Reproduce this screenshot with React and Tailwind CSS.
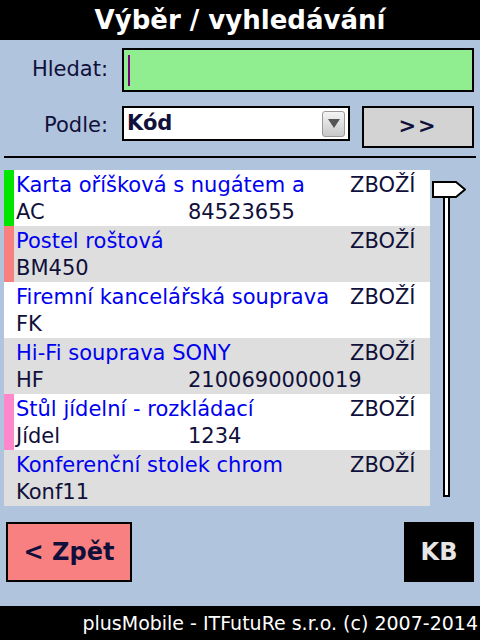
const rows = [
  { name: "Karta oříšková s nugátem a", code: "AC", ean: "84523655", mark: "bg-[#00e600]", bg: "bg-white" },
  { name: "Postel roštová", code: "BM450", ean: "", mark: "bg-[#f88080]", bg: "bg-[#dedede]" },
  { name: "Firemní kancelářská souprava", code: "FK", ean: "", mark: "", bg: "bg-white" },
  { name: "Hi-Fi souprava SONY", code: "HF", ean: "2100690000019", mark: "", bg: "bg-[#dedede]" },
  { name: "Stůl jídelní - rozkládací", code: "Jídel", ean: "1234", mark: "bg-[#ff88cc]", bg: "bg-white" },
  { name: "Konferenční stolek chrom", code: "Konf11", ean: "", mark: "", bg: "bg-[#dedede]" },
];

function Row({ row }) {
  return (
    <div className={`flex h-[56px] ${row.bg}`}>
      <div className={`w-[10px] shrink-0 ${row.mark}`} />
      <div className="flex flex-1 flex-col pl-[2px] pt-[2px] text-[21px] leading-[27px]">
        <div className="flex">
          <span className="w-[334px] whitespace-nowrap text-[#0000f0]">{row.name}</span>
          <span className="text-[#10103a]">ZBOŽÍ</span>
        </div>
        <div className="flex text-[#10103a]">
          <span className="w-[172px]">{row.code}</span>
          <span>{row.ean}</span>
        </div>
      </div>
    </div>
  );
}

export default function App() {
  return (
    <div className="flex h-[640px] w-[480px] flex-col overflow-hidden bg-[#b0c4de] font-['DejaVu_Sans',sans-serif] text-[#10103a]">
      <div className="flex h-[40px] shrink-0 items-center justify-center bg-black text-[26px] font-bold text-white">
        Výběr / vyhledávání
      </div>

      <div className="flex items-center pt-[8px]">
        <span className="w-[108px] text-right text-[21px]">Hledat:</span>
        <div className="ml-[14px] flex h-[44px] w-[352px] items-center border-2 border-black bg-[#90ee90] pl-[4px]">
          <div className="h-[31px] w-[2px] bg-[#800080]" />
        </div>
      </div>

      <div className="mt-[14px] flex items-start">
        <span className="mt-[4px] w-[108px] text-right text-[21px]">Podle:</span>
        <div className="ml-[14px] flex h-[35px] w-[228px] items-center justify-between border-2 border-black bg-white pl-[3px] pr-[3px]">
          <span className="text-[21px] font-bold">Kód</span>
          <div className="flex h-[26px] w-[23px] items-center justify-center rounded-[3px] border border-[#9a9a9a] bg-gradient-to-b from-[#f4f4f4] to-[#c8c8c8]">
            <svg width="12" height="9" viewBox="0 0 12 9">
              <polygon points="0,0 12,0 6,9" fill="#555" />
            </svg>
          </div>
        </div>
        <div className="ml-[12px] flex h-[42px] w-[112px] items-center justify-center border-2 border-black bg-[#d3d3d3] text-[21px] font-bold tracking-[2px]">
          &gt;&gt;
        </div>
      </div>

      <div className="mx-[4px] mt-[8px] h-[2px] bg-black" />

      <div className="mt-[12px] flex">
        <div className="ml-[4px] w-[426px] overflow-hidden">
          {rows.map((r) => (
            <Row key={r.code} row={r} />
          ))}
        </div>
        <div className="ml-[2px] flex flex-col pt-[11px]">
          <svg width="34" height="17" viewBox="0 0 34 17">
            <polygon points="1,1 24,1 33,8.5 24,16 1,16" fill="white" stroke="black" strokeWidth="2" />
          </svg>
          <div className="ml-[11px] h-[299px] w-[7px] border-2 border-t-0 border-black bg-white" />
        </div>
      </div>

      <div className="mt-[16px] flex justify-between px-[6px]">
        <div className="flex h-[60px] w-[126px] items-center justify-center border-2 border-black bg-[#f88080] text-[24px] font-bold">
          &lt; Zpět
        </div>
        <div className="flex h-[60px] w-[70px] items-center justify-center bg-black text-[24px] font-bold text-[#e6e6e6]">
          KB
        </div>
      </div>

      <div className="mt-auto flex h-[34px] items-center justify-end whitespace-nowrap bg-black pr-[2px] text-[19px] text-white">
        plusMobile - ITFutuRe s.r.o. (c) 2007-2014
      </div>
    </div>
  );
}
